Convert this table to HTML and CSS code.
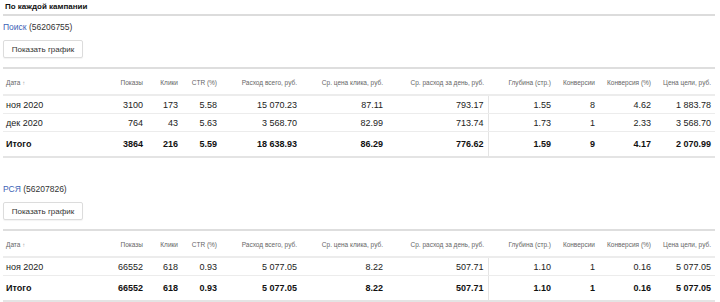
FILE: index.html
```html
<!DOCTYPE html>
<html lang="ru">
<head>
<meta charset="utf-8">
<link rel="stylesheet" href="styles.css">
</head>
<body>
<div class="page">
  <div class="title">По каждой кампании</div>

  <section class="campaign">
    <div class="name"><a class="link">Поиск</a> (56206755)</div>
    <button class="btn">Показать график</button>
    <table class="stats">
      <colgroup>
        <col class="c-date"><col class="c-35"><col class="c-35"><col class="c-39"><col class="c-80"><col class="c-86"><col class="c-101"><col class="c-67"><col class="c-44"><col class="c-56"><col class="c-60">
      </colgroup>
      <thead>
        <tr><th class="l">Дата <span class="arr">↑</span></th><th>Показы</th><th>Клики</th><th>CTR (%)</th><th>Расход всего, руб.</th><th>Ср. цена клика, руб.</th><th>Ср. расход за день, руб.</th><th>Глубина (стр.)</th><th>Конверсии</th><th>Конверсия (%)</th><th>Цена цели, руб.</th></tr>
      </thead>
      <tbody>
        <tr><td class="l">ноя 2020</td><td>3100</td><td>173</td><td>5.58</td><td>15 070.23</td><td>87.11</td><td class="sep">793.17</td><td>1.55</td><td>8</td><td>4.62</td><td>1 883.78</td></tr>
        <tr><td class="l">дек 2020</td><td>764</td><td>43</td><td>5.63</td><td>3 568.70</td><td>82.99</td><td class="sep">713.74</td><td>1.73</td><td>1</td><td>2.33</td><td>3 568.70</td></tr>
        <tr class="total"><td class="l">Итого</td><td>3864</td><td>216</td><td>5.59</td><td>18 638.93</td><td>86.29</td><td class="sep">776.62</td><td>1.59</td><td>9</td><td>4.17</td><td>2 070.99</td></tr>
      </tbody>
    </table>
  </section>

  <section class="campaign second">
    <div class="name"><a class="link">РСЯ</a> (56207826)</div>
    <button class="btn">Показать график</button>
    <table class="stats">
      <colgroup>
        <col class="c-date"><col class="c-35"><col class="c-35"><col class="c-39"><col class="c-80"><col class="c-86"><col class="c-101"><col class="c-67"><col class="c-44"><col class="c-56"><col class="c-60">
      </colgroup>
      <thead>
        <tr><th class="l">Дата <span class="arr">↑</span></th><th>Показы</th><th>Клики</th><th>CTR (%)</th><th>Расход всего, руб.</th><th>Ср. цена клика, руб.</th><th>Ср. расход за день, руб.</th><th>Глубина (стр.)</th><th>Конверсии</th><th>Конверсия (%)</th><th>Цена цели, руб.</th></tr>
      </thead>
      <tbody>
        <tr><td class="l">ноя 2020</td><td>66552</td><td>618</td><td>0.93</td><td>5 077.05</td><td>8.22</td><td class="sep">507.71</td><td>1.10</td><td>1</td><td>0.16</td><td>5 077.05</td></tr>
        <tr class="total"><td class="l">Итого</td><td>66552</td><td>618</td><td>0.93</td><td>5 077.05</td><td>8.22</td><td class="sep">507.71</td><td>1.10</td><td>1</td><td>0.16</td><td>5 077.05</td></tr>
      </tbody>
    </table>
  </section>
</div>
</body>
</html>
```

FILE: styles.css
```css
html, body {
  margin: 0;
  padding: 0;
  background: #fff;
}
body {
  font-family: "Liberation Sans", Arial, sans-serif;
  color: #222;
}
.page {
  width: 712px;
  padding: 0 5px 0 3px;
}
.title {
  font-size: 8px;
  font-weight: bold;
  color: #111;
  height: 14px;
  line-height: 14px;
  padding-left: 2px;
  border-bottom: 2px solid #dcdcdc;
}
.campaign {
  display: flex;
  flex-direction: column;
  align-items: flex-start;
}
.name {
  font-size: 8.5px;
  height: 12px;
  line-height: 12px;
  margin-top: 5px;
  color: #333;
}
.second .name {
  margin-top: 25px;
}
.link {
  color: #3b62b5;
}
.btn {
  margin-top: 7px;
  height: 18px;
  width: 80px;
  padding: 0;
  font-family: inherit;
  font-size: 8px;
  color: #333;
  background: #fff;
  border: 1px solid #dcdcdc;
  border-radius: 2px;
  box-shadow: 0 1px 1px rgba(0,0,0,0.05);
}
.stats {
  margin-top: 9px;
  width: 712px;
  table-layout: fixed;
  border-collapse: collapse;
  border-top: 2px solid #dedede;
  border-bottom: 2px solid #e4e4e4;
}
.c-date { width: 109px; }
.c-35 { width: 35px; }
.c-39 { width: 39px; }
.c-44 { width: 44px; }
.c-56 { width: 56px; }
.c-60 { width: 60px; }
.c-67 { width: 67px; }
.c-80 { width: 80px; }
.c-86 { width: 86px; }
.c-101 { width: 101px; }
.stats th {
  font-size: 6.5px;
  font-weight: normal;
  color: #666;
  text-align: right;
  height: 24px;
  padding: 1px 4px 0 0;
  border-bottom: 2px solid #ececec;
  white-space: nowrap;
}
.stats td {
  font-size: 9px;
  text-align: right;
  height: 17px;
  padding: 0 4px 0 0;
  border-bottom: 1px solid #ececec;
  white-space: nowrap;
}
.stats .l {
  text-align: left;
  padding-left: 3px;
}
.arr {
  color: #999;
  font-size: 6px;
}
.stats td.sep {
  border-right: 1px solid #e4e4e4;
}
.stats tr.total td {
  font-weight: bold;
  color: #111;
  height: 24px;
  border-bottom: none;
}
```
